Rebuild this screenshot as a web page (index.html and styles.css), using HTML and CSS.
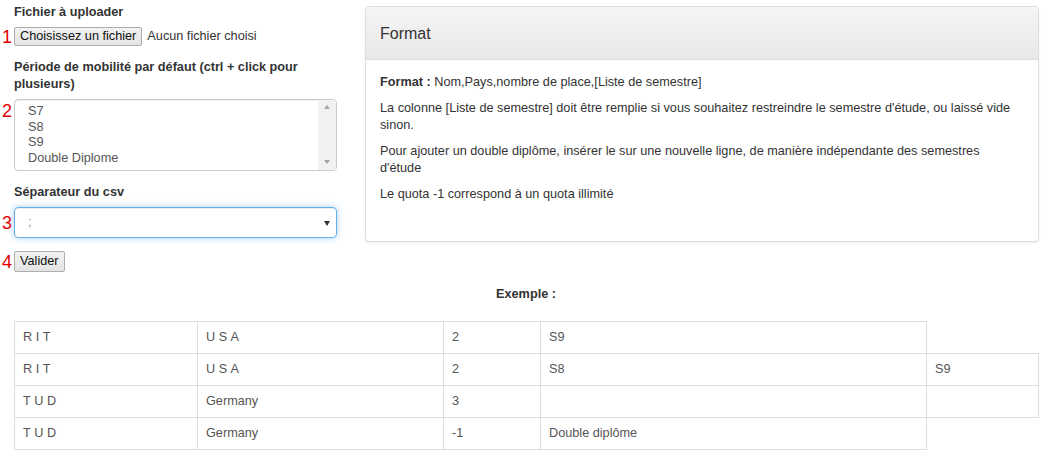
FILE: index.html
```html
<!DOCTYPE html>
<html lang="fr">
<head>
<meta charset="utf-8">
<title>Upload</title>
<link rel="stylesheet" href="styles.css">
</head>
<body>
<div class="page">
  <div class="top">
    <form class="form">
      <div class="group">
        <label class="label">Fichier à uploader</label>
        <div class="line line-file">
          <span class="num">1</span>
          <button type="button" class="btn-native">Choisissez un fichier</button>
          <span class="nofile">Aucun fichier choisi</span>
        </div>
      </div>
      <div class="group">
        <label class="label">Période de mobilité par défaut (ctrl + click pour plusieurs)</label>
        <div class="line line-top">
          <span class="num num-top">2</span>
          <div class="multi">
            <div class="opts">
              <div>S7</div>
              <div>S8</div>
              <div>S9</div>
              <div>Double Diplome</div>
            </div>
            <div class="sbar">
              <span class="arr-up"></span>
              <span class="arr-down"></span>
            </div>
          </div>
        </div>
      </div>
      <div class="group">
        <label class="label">Séparateur du csv</label>
        <div class="line">
          <span class="num">3</span>
          <div class="single">
            <span class="val">;</span>
            <span class="caret"></span>
          </div>
        </div>
      </div>
      <div class="line">
        <span class="num">4</span>
        <button type="button" class="btn-native btn-valider">Valider</button>
      </div>
    </form>
    <div class="panel">
      <div class="panel-heading">Format</div>
      <div class="panel-body">
        <p><b>Format :</b> Nom,Pays,nombre de place,[Liste de semestre]</p>
        <p>La colonne [Liste de semestre] doit être remplie si vous souhaitez restreindre le semestre d'étude, ou laissé vide sinon.</p>
        <p>Pour ajouter un double diplôme, insérer le sur une nouvelle ligne, de manière indépendante des semestres d'étude</p>
        <p>Le quota -1 correspond à un quota illimité</p>
      </div>
    </div>
  </div>
  <div class="exemple">Exemple :</div>
  <table class="tbl">
    <colgroup>
      <col class="c1"><col class="c2"><col class="c3"><col class="c4"><col class="c5">
    </colgroup>
    <tr><td class="sp">RIT</td><td class="sp">USA</td><td>2</td><td>S9</td></tr>
    <tr><td class="sp">RIT</td><td class="sp">USA</td><td>2</td><td>S8</td><td>S9</td></tr>
    <tr><td class="sp">TUD</td><td>Germany</td><td>3</td><td></td><td></td></tr>
    <tr><td class="sp">TUD</td><td>Germany</td><td>-1</td><td>Double diplôme</td></tr>
  </table>
</div>
</body>
</html>
```

FILE: styles.css
```css
html, body {
  margin: 0;
  padding: 0;
  background: #fff;
}
body {
  font-family: "Liberation Sans", Arial, sans-serif;
  font-size: 12.7px;
  line-height: 17px;
  color: #333;
}
.page {
  padding: 4px 13px 0 14px;
}
.top {
  display: grid;
  grid-template-columns: 323px 674px;
  column-gap: 28px;
  align-items: start;
}
.form {
  margin: 0;
}
.group {
  margin-bottom: 13px;
}
.label {
  display: block;
  font-weight: bold;
  margin-bottom: 6px;
  color: #333;
}
.line {
  display: flex;
  align-items: center;
  margin-left: -14px;
}
.line-top {
  align-items: flex-start;
}
.num {
  width: 14px;
  flex: 0 0 14px;
  text-align: center;
  color: #e30000;
  font-size: 18px;
  line-height: 18px;
}
.num-top {
  margin-top: 3px;
}
.btn-native {
  font-family: "Liberation Sans", Arial, sans-serif;
  font-size: 12.7px;
  line-height: 15px;
  color: #111;
  height: 19px;
  padding: 1px 5px;
  border: 1px solid #adadad;
  border-radius: 2px;
  background: linear-gradient(to bottom, #f2f2f2 0%, #e4e4e4 100%);
  cursor: default;
}
.nofile {
  margin-left: 5px;
  color: #333;
}
.multi {
  flex: 1;
  height: 72px;
  box-sizing: border-box;
  border: 1px solid #ccc;
  border-radius: 4px;
  box-shadow: inset 0 1px 1px rgba(0,0,0,.075);
  display: flex;
  overflow: hidden;
}
.opts {
  flex: 1;
  padding: 4px 0 0 13px;
  line-height: 15.6px;
  color: #555;
}
.sbar {
  width: 17px;
  background: #f1f1f1;
  position: relative;
  border-left: 1px solid #f4f4f4;
}
.arr-up, .arr-down {
  position: absolute;
  left: 5px;
  width: 0;
  height: 0;
  border-left: 3.5px solid transparent;
  border-right: 3.5px solid transparent;
}
.arr-up {
  top: 5px;
  border-bottom: 4px solid #a3a3a3;
}
.arr-down {
  bottom: 6px;
  border-top: 4px solid #a3a3a3;
}
.single {
  flex: 1;
  height: 31px;
  box-sizing: border-box;
  border: 1px solid #66afe9;
  border-radius: 4px;
  box-shadow: inset 0 1px 1px rgba(0,0,0,.075), 0 0 6px rgba(102,175,233,.6);
  display: flex;
  align-items: center;
  justify-content: space-between;
  padding: 0 6px 0 13px;
}
.val {
  color: #888;
}
.caret {
  width: 0;
  height: 0;
  border-left: 3.5px solid transparent;
  border-right: 3.5px solid transparent;
  border-top: 5px solid #333;
  margin-top: 1px;
}
.btn-valider {
  height: 21px;
  padding: 1px 5px;
}
.panel {
  margin-top: 2px;
  border: 1px solid #ddd;
  border-radius: 4px;
  box-shadow: 0 1px 2px rgba(0,0,0,.08);
  background: #fff;
  min-height: 236px;
  box-sizing: border-box;
}
.panel-heading {
  height: 53px;
  box-sizing: border-box;
  display: flex;
  align-items: center;
  padding: 0 14px;
  font-size: 16px;
  color: #333;
  background: linear-gradient(to bottom, #f5f5f5 0%, #e8e8e8 100%);
  border-bottom: 1px solid #ddd;
  border-radius: 3px 3px 0 0;
}
.panel-body {
  padding: 14px 14px 15px 14px;
}
.panel-body p {
  margin: 0 0 9px 0;
}
.exemple {
  text-align: center;
  font-weight: bold;
  margin-top: 14px;
  padding-right: 1px;
}
.tbl {
  margin-top: 18px;
  border-collapse: collapse;
  table-layout: fixed;
  width: 1024px;
  color: #555;
}
.c1 { width: 183px; }
.c2 { width: 246px; }
.c3 { width: 97px; }
.c4 { width: 386px; }
.c5 { width: 112px; }
.tbl td {
  border: 1px solid #ddd;
  padding: 7px 8px 7px 8px;
  line-height: 17px;
  height: 17px;
  white-space: nowrap;
}
.tbl td.sp {
  letter-spacing: 3.5px;
}
```
